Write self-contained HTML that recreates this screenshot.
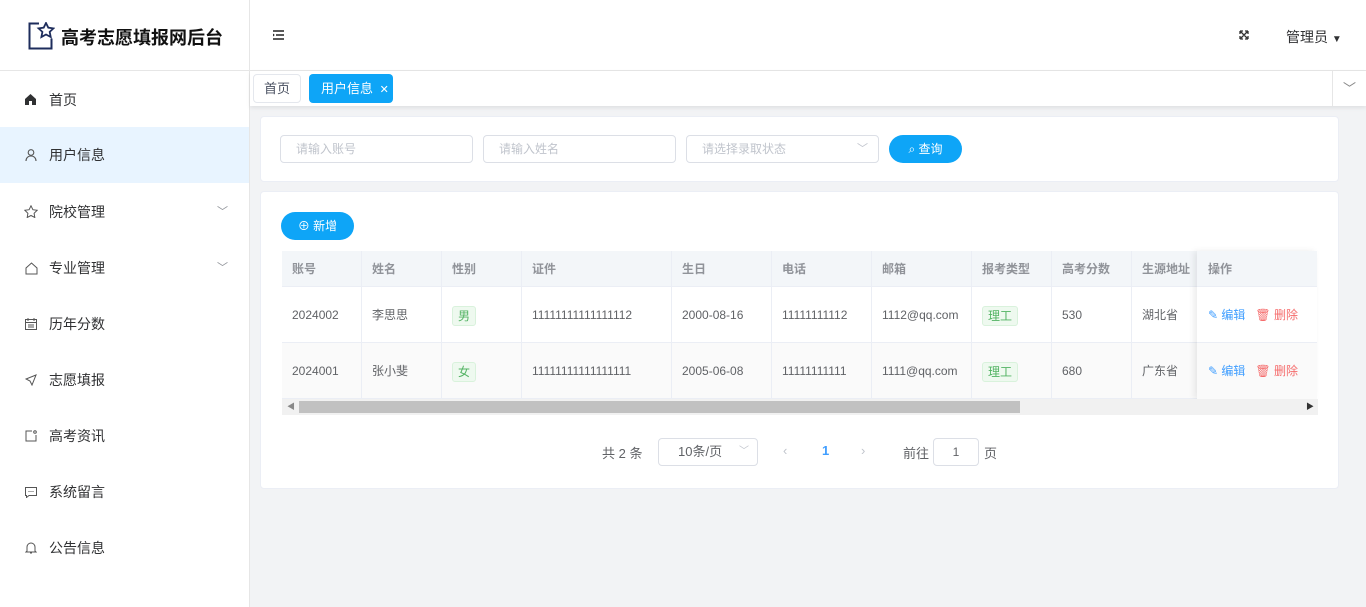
<!DOCTYPE html>
<html><head><meta charset="utf-8"><style>
*{margin:0;padding:0;box-sizing:border-box}
body{width:1366px;height:607px;overflow:hidden;background:#f2f3f5;font-family:"Liberation Sans","Noto Sans CJK SC",sans-serif;font-size:13px;color:#606266;position:relative}
.a{position:absolute}
.side{left:0;top:0;width:250px;height:607px;background:#fff;border-right:1px solid #e6e6e6}
.logo{left:0;top:0;width:249px;height:71px;border-bottom:1px solid #e6e6e6}
.mi{position:absolute;left:0;width:249px;height:56px;line-height:56px;padding-left:49px;font-size:14px;color:#303133}
.mi svg{position:absolute;left:25px;top:22px}
.hdr{left:250px;top:0;width:1116px;height:71px;background:#fff;border-bottom:1px solid #e6e6e6}
.tabs{left:250px;top:71px;width:1116px;height:35px;background:#fff;box-shadow:0 2px 4px rgba(0,0,0,.08)}
.card{background:#fff;border:1px solid #ebeef5;border-radius:4px}
.inp{height:28px;border:1px solid #dcdfe6;border-radius:4px;line-height:26px;padding-left:15px;color:#c0c4cc;font-size:12px;background:#fff}
.btn{background:#0ea5f7;color:#fff;border-radius:20px;text-align:center;font-size:12px}
.th,.td{position:absolute;padding-left:10px;border-right:1px solid #ebeef5;border-bottom:1px solid #ebeef5;font-size:12px}
.th{top:251px;height:36px;line-height:36px;background:#f3f6f9;color:#909399;font-weight:bold}
.td{height:56px;line-height:56px;color:#606266}
.tag{display:inline-block;height:20px;line-height:18px;padding:0 5px;border:1px solid #d9f2dc;background:#eef9ef;color:#53b363;border-radius:3px;font-size:12px;vertical-align:middle}
</style></head><body>
<div class="a side"></div>
<div class="a logo">
<svg class="a" style="left:28px;top:22px" width="27" height="28" viewBox="0 0 27 28"><path d="M11 1.5H1.5v25h22v-10" fill="none" stroke="#1e2d5c" stroke-width="2"/><path d="M18 1l2.3 4.7 5.1.7-3.7 3.5 1 5.1-4.7-2.5-4.6 2.5 1-5.1L10.6 6.4l5.1-.7z" fill="none" stroke="#1e2d5c" stroke-width="1.8"/></svg>
<div class="a" style="left:61px;top:24px;font-size:18px;font-weight:bold;color:#111">高考志愿填报网后台</div>
</div>
<div class="mi" style="top:72px"><svg width="11" height="11" viewBox="0 0 11 11"><path d="M5.5 0L0 5v6h4V7h3v4h4V5z" fill="#303133"/></svg>首页</div>
<div class="mi" style="top:127px;background:#e8f4ff"><svg width="12" height="12" viewBox="0 0 12 12"><circle cx="6" cy="3.5" r="2.8" fill="none" stroke="#555" stroke-width="1.1"/><path d="M1 12c0-3 2-5 5-5s5 2 5 5" fill="none" stroke="#555" stroke-width="1.1"/></svg>用户信息</div>
<div class="mi" style="top:184px"><svg width="14" height="13" viewBox="0 0 14 13" style="left:24px;top:21px"><path d="M7 .8l1.9 3.9 4.2.6-3 3 .7 4.2L7 10.5l-3.8 2 .7-4.2-3-3 4.2-.6z" fill="none" stroke="#555"/></svg>院校管理<span class="a" style="left:217px;top:0;color:#909399;font-size:11px">﹀</span></div>
<div class="mi" style="top:240px"><svg width="13" height="13" viewBox="0 0 13 13"><path d="M1 6L6.5 1 12 6v6H1z" fill="none" stroke="#555"/></svg>专业管理<span class="a" style="left:217px;top:0;color:#909399;font-size:11px">﹀</span></div>
<div class="mi" style="top:296px"><svg width="12" height="12" viewBox="0 0 12 12"><rect x=".5" y="1.5" width="11" height="10" fill="none" stroke="#555"/><path d="M.5 4.5h11M3 0v3M9 0v3M3 7h6M3 9h6" stroke="#555"/></svg>历年分数</div>
<div class="mi" style="top:352px"><svg width="12" height="12" viewBox="0 0 12 12"><path d="M11 1L1 5l4 2 2 4z" fill="none" stroke="#555"/></svg>志愿填报</div>
<div class="mi" style="top:408px"><svg width="12" height="12" viewBox="0 0 12 12"><path d="M7 1H1v10h10V5" fill="none" stroke="#555"/><circle cx="10" cy="2" r="1.3" fill="none" stroke="#555"/></svg>高考资讯</div>
<div class="mi" style="top:464px"><svg width="12" height="12" viewBox="0 0 12 12"><path d="M.5 1.5h11v8H4L1.5 11.5v-2h-1z" fill="none" stroke="#555"/><path d="M3.5 5.5h1M5.5 5.5h1M7.5 5.5h1" stroke="#555"/></svg>系统留言</div>
<div class="mi" style="top:520px"><svg width="12" height="12" viewBox="0 0 12 12"><path d="M2 9V5a4 4 0 018 0v4l1 1H1zM5 11h2" fill="none" stroke="#555"/></svg>公告信息</div>

<div class="a hdr">
<svg class="a" style="left:23px;top:30px" width="11" height="10" viewBox="0 0 11 10"><path d="M0 1h11M3 5h8M0 9h11" stroke="#222" stroke-width="1.6"/><path d="M0 3.5L1.8 5 0 6.5z" fill="#222"/></svg>
<svg class="a" style="left:989px;top:30px" width="10" height="10" viewBox="0 0 10 10"><path d="M1 1l8 8M9 1L1 9M1 1h3M1 1v3M9 9H6M9 9V6M9 1H6M9 1v3M1 9h3M1 9V6" stroke="#333" stroke-width="1.3" fill="none"/></svg>
<div class="a" style="left:1036px;top:27px;font-size:14px;color:#303133">管理员 <span style="font-size:10px">▼</span></div>
</div>
<div class="a tabs">
<div class="a" style="left:3px;top:3px;width:48px;height:29px;border:1px solid #e4e7ed;border-radius:4px;text-align:center;line-height:27px;color:#495060">首页</div>
<div class="a" style="left:59px;top:3px;width:84px;height:29px;background:#0ea5f7;border-radius:4px;color:#fff;line-height:29px;padding-left:12px">用户信息 <span style="margin-left:3px;font-size:11px">✕</span></div>
<div class="a" style="left:1082px;top:0;width:34px;height:35px;border-left:1px solid #e6e6e6;text-align:center;line-height:35px;color:#888">﹀</div>
</div>

<div class="a card" style="left:260px;top:116px;width:1079px;height:66px"></div>
<div class="a inp" style="left:280px;top:135px;width:193px">请输入账号</div>
<div class="a inp" style="left:483px;top:135px;width:193px">请输入姓名</div>
<div class="a inp" style="left:686px;top:135px;width:193px">请选择录取状态<span class="a" style="right:10px;top:0;font-size:11px">﹀</span></div>
<div class="a btn" style="left:889px;top:135px;width:73px;height:28px;line-height:28px">⌕ 查询</div>

<div class="a card" style="left:260px;top:191px;width:1079px;height:298px"></div>
<div class="a btn" style="left:281px;top:212px;width:73px;height:28px;line-height:28px">⊕ 新增</div>

<div class="th" style="left:282px;width:80px">账号</div>
<div class="th" style="left:362px;width:80px">姓名</div>
<div class="th" style="left:442px;width:80px">性别</div>
<div class="th" style="left:522px;width:150px">证件</div>
<div class="th" style="left:672px;width:100px">生日</div>
<div class="th" style="left:772px;width:100px">电话</div>
<div class="th" style="left:872px;width:100px">邮箱</div>
<div class="th" style="left:972px;width:80px">报考类型</div>
<div class="th" style="left:1052px;width:80px">高考分数</div>
<div class="th" style="left:1132px;width:66px">生源地址</div>

<div class="td" style="top:287px;left:282px;width:80px">2024002</div>
<div class="td" style="top:287px;left:362px;width:80px">李思思</div>
<div class="td" style="top:287px;left:442px;width:80px"><span class="tag">男</span></div>
<div class="td" style="top:287px;left:522px;width:150px">11111111111111112</div>
<div class="td" style="top:287px;left:672px;width:100px">2000-08-16</div>
<div class="td" style="top:287px;left:772px;width:100px">11111111112</div>
<div class="td" style="top:287px;left:872px;width:100px">1112@qq.com</div>
<div class="td" style="top:287px;left:972px;width:80px"><span class="tag">理工</span></div>
<div class="td" style="top:287px;left:1052px;width:80px">530</div>
<div class="td" style="top:287px;left:1132px;width:66px">湖北省</div>

<div class="td" style="top:343px;left:282px;width:80px;background:#fafafa">2024001</div>
<div class="td" style="top:343px;left:362px;width:80px;background:#fafafa">张小斐</div>
<div class="td" style="top:343px;left:442px;width:80px;background:#fafafa"><span class="tag">女</span></div>
<div class="td" style="top:343px;left:522px;width:150px;background:#fafafa">11111111111111111</div>
<div class="td" style="top:343px;left:672px;width:100px;background:#fafafa">2005-06-08</div>
<div class="td" style="top:343px;left:772px;width:100px;background:#fafafa">11111111111</div>
<div class="td" style="top:343px;left:872px;width:100px;background:#fafafa">1111@qq.com</div>
<div class="td" style="top:343px;left:972px;width:80px;background:#fafafa"><span class="tag">理工</span></div>
<div class="td" style="top:343px;left:1052px;width:80px;background:#fafafa">680</div>
<div class="td" style="top:343px;left:1132px;width:66px;background:#fafafa">广东省</div>

<div class="a" style="left:1197px;top:251px;width:120px;height:148px;box-shadow:-3px 0 6px rgba(0,0,0,.08);background:#fff">
<div class="a" style="left:0;top:0;width:120px;height:36px;background:#f3f6f9;line-height:36px;padding-left:11px;color:#909399;font-weight:bold;border-bottom:1px solid #ebeef5;font-size:12px">操作</div>
<div class="a" style="left:0;top:36px;width:120px;height:56px;line-height:56px;padding-left:11px;border-bottom:1px solid #ebeef5;font-size:12px"><span style="color:#409eff">✎ 编辑</span>&nbsp;&nbsp;&nbsp;<span style="color:#f56c6c">🗑 删除</span></div>
<div class="a" style="left:0;top:92px;width:120px;height:56px;line-height:56px;padding-left:11px;background:#fafafa;font-size:12px"><span style="color:#409eff">✎ 编辑</span>&nbsp;&nbsp;&nbsp;<span style="color:#f56c6c">🗑 删除</span></div>
</div>

<div class="a" style="left:282px;top:399px;width:1036px;height:16px;background:#f1f1f1"></div>
<div class="a" style="left:299px;top:401px;width:721px;height:12px;background:#c1c1c1"></div>
<div class="a" style="left:287px;top:401px;font-size:8px;color:#888">◀</div>
<div class="a" style="left:1306px;top:401px;font-size:8px;color:#333">▶</div>

<div class="a" style="left:602px;top:443px;color:#606266">共 2 条</div>
<div class="a inp" style="left:658px;top:438px;width:100px;height:28px;color:#606266;padding-left:19px;font-size:13px">10条/页<span class="a" style="right:8px;top:0;font-size:10px;color:#c0c4cc">﹀</span></div>
<div class="a" style="left:783px;top:443px;color:#c0c4cc">‹</div>
<div class="a" style="left:822px;top:443px;color:#409eff;font-weight:bold">1</div>
<div class="a" style="left:861px;top:443px;color:#c0c4cc">›</div>
<div class="a" style="left:903px;top:443px">前往</div>
<div class="a inp" style="left:933px;top:438px;width:46px;height:28px;color:#606266;padding-left:0;text-align:center">1</div>
<div class="a" style="left:984px;top:443px">页</div>
</body></html>
